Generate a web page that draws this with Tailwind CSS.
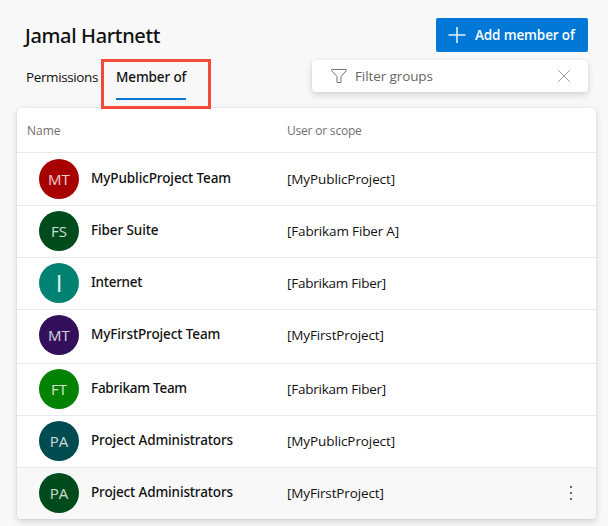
<!DOCTYPE html>
<html lang="en">
<head>
<meta charset="utf-8">
<title>Jamal Hartnett</title>
<script src="https://cdn.jsdelivr.net/npm/@tailwindcss/browser@4"></script>
</head>
<body class="h-[526px] w-[608px] overflow-hidden bg-[#f8f8f8] font-['Open_Sans','Noto_Sans',sans-serif] text-[13.5px] text-[#111] whitespace-nowrap">
<header class="flex h-[108px] justify-between pl-[25px] pr-5 pt-[18px]">
  <div class="flex flex-col">
    <h1 class="h-[34px] font-['Noto_Sans',sans-serif] text-[20px] font-medium leading-[35px] tracking-[-0.36px]">Jamal Hartnett</h1>
    <nav class="mt-2 flex h-10 gap-[17px] pl-px">
      <a class="w-[73px] leading-[34px] tracking-[-0.38px]">Permissions</a>
      <div class="relative">
        <a class="block h-10 w-[70px] border-b-2 border-[#0078d4] font-['Noto_Sans',sans-serif] font-medium leading-[34px] tracking-[-0.12px]">Member of</a>
        <div class="absolute -left-[15px] -top-px h-[50px] w-[110px] border-3 border-[#f04a38]"></div>
      </div>
    </nav>
  </div>
  <div class="flex flex-col items-end gap-2">
    <button class="flex h-[34px] w-[152px] items-center rounded-[2px] bg-[#0078d7] pl-3 text-white">
      <svg class="h-[18px] w-[18px]" viewBox="0 0 18 18" fill="none" stroke="#e3f1fc" stroke-width="1.6"><path d="M9 1v16M.5 9h17"/></svg>
      <span class="ml-[9px] font-semibold tracking-[-0.13px]">Add member of</span>
    </button>
    <div class="flex h-8 w-[276px] items-center rounded-[4px] bg-white pl-[18px] pr-4 text-[#666] shadow-[0_3px_7px_rgba(0,0,0,0.14),0_0_2px_rgba(0,0,0,0.09)]">
      <svg class="h-[18px] w-[18px]" viewBox="0 0 18 18" fill="none" stroke="#77717a" stroke-width="1"><path d="M1.5 2.5h15v1L11 9.5v6H7v-6L1.5 3.5z"/></svg>
      <span class="ml-[7px] flex-1 tracking-[-0.1px]">Filter groups</span>
      <svg class="h-4 w-4" viewBox="0 0 16 16" fill="none" stroke="#a49ea6" stroke-width="1"><path d="M2.5 2.5l11 11M13.5 2.5l-11 11"/></svg>
    </div>
  </div>
</header>
<main class="ml-[17px] h-[411px] w-[579px] overflow-hidden rounded-[4px] bg-white shadow-[0_3px_7px_rgba(0,0,0,0.14),0_0_2px_rgba(0,0,0,0.13)]">
  <div class="flex h-[45px] items-center border-b border-[#e9e9e9] pl-[10px] pt-[2px] text-[12px] text-[#707070]">
    <span class="w-[260px]">Name</span><span class="tracking-[-0.2px]">User or scope</span>
  </div>
  <div class="flex h-[53px] border-b border-[#e9e9e9] pl-[22px] pt-[6px]">
    <div class="h-10 w-10 rounded-full bg-[#a80000] text-center text-[15px] leading-10 text-white/80">MT</div>
    <div class="ml-3 w-[196px] font-['Noto_Sans',sans-serif] font-medium leading-[38px] tracking-[-0.1px]">MyPublicProject Team</div>
    <div class="leading-10 tracking-[-0.1px]">[MyPublicProject]</div>
  </div>
  <div class="flex h-[52px] border-b border-[#e9e9e9] pl-[22px] pt-[5px]">
    <div class="h-10 w-10 rounded-full bg-[#004b1c] text-center text-[15px] leading-10 text-white/80">FS</div>
    <div class="ml-3 w-[196px] font-['Noto_Sans',sans-serif] font-medium leading-[38px] tracking-[-0.1px]">Fiber Suite</div>
    <div class="leading-10 tracking-[-0.16px]">[Fabrikam Fiber A]</div>
  </div>
  <div class="flex h-[52px] border-b border-[#e9e9e9] pl-[22px] pt-[5px]">
    <div class="h-10 w-10 rounded-full bg-[#008272] text-center text-[24px] leading-10 text-white/90">I</div>
    <div class="ml-3 w-[196px] font-['Noto_Sans',sans-serif] font-medium leading-[38px] tracking-[-0.25px]">Internet</div>
    <div class="leading-10 tracking-[-0.24px]">[Fabrikam Fiber]</div>
  </div>
  <div class="flex h-[54px] border-b border-[#e9e9e9] pl-[22px] pt-[5px]">
    <div class="h-10 w-10 rounded-full bg-[#32105c] text-center text-[15px] leading-10 text-white/80">MT</div>
    <div class="ml-3 w-[196px] font-['Noto_Sans',sans-serif] font-medium leading-[38px] tracking-[-0.11px]">MyFirstProject Team</div>
    <div class="leading-10 tracking-[-0.14px]">[MyFirstProject]</div>
  </div>
  <div class="flex h-[52px] border-b border-[#e9e9e9] pl-[22px] pt-[5px]">
    <div class="h-10 w-10 rounded-full bg-[#048204] text-center text-[15px] leading-10 text-white/80">FT</div>
    <div class="ml-3 w-[196px] font-['Noto_Sans',sans-serif] font-medium leading-[38px] tracking-[-0.24px]">Fabrikam Team</div>
    <div class="leading-10 tracking-[-0.24px]">[Fabrikam Fiber]</div>
  </div>
  <div class="flex h-[52px] border-b border-[#e9e9e9] pl-[22px] pt-[5px]">
    <div class="h-10 w-10 rounded-full bg-[#004b50] text-center text-[15px] leading-10 text-white/80">PA</div>
    <div class="ml-3 w-[196px] font-['Noto_Sans',sans-serif] font-medium leading-[38px] tracking-[-0.14px]">Project Administrators</div>
    <div class="leading-10 tracking-[-0.1px]">[MyPublicProject]</div>
  </div>
  <div class="flex h-[51px] bg-[#f8f8f8] pl-[22px] pr-[17px] pt-[5px]">
    <div class="h-10 w-10 rounded-full bg-[#004b1c] text-center text-[15px] leading-10 text-white/80">PA</div>
    <div class="ml-3 w-[196px] font-['Noto_Sans',sans-serif] font-medium leading-[38px] tracking-[-0.14px]">Project Administrators</div>
    <div class="flex-1 leading-10 tracking-[-0.14px]">[MyFirstProject]</div>
    <svg class="mt-3 h-4 w-4" viewBox="0 0 16 16" fill="#666"><path d="M7 1h2v2H7zM7 7h2v2H7zM7 13h2v2H7z"/></svg>
  </div>
</main>
</body>
</html>
